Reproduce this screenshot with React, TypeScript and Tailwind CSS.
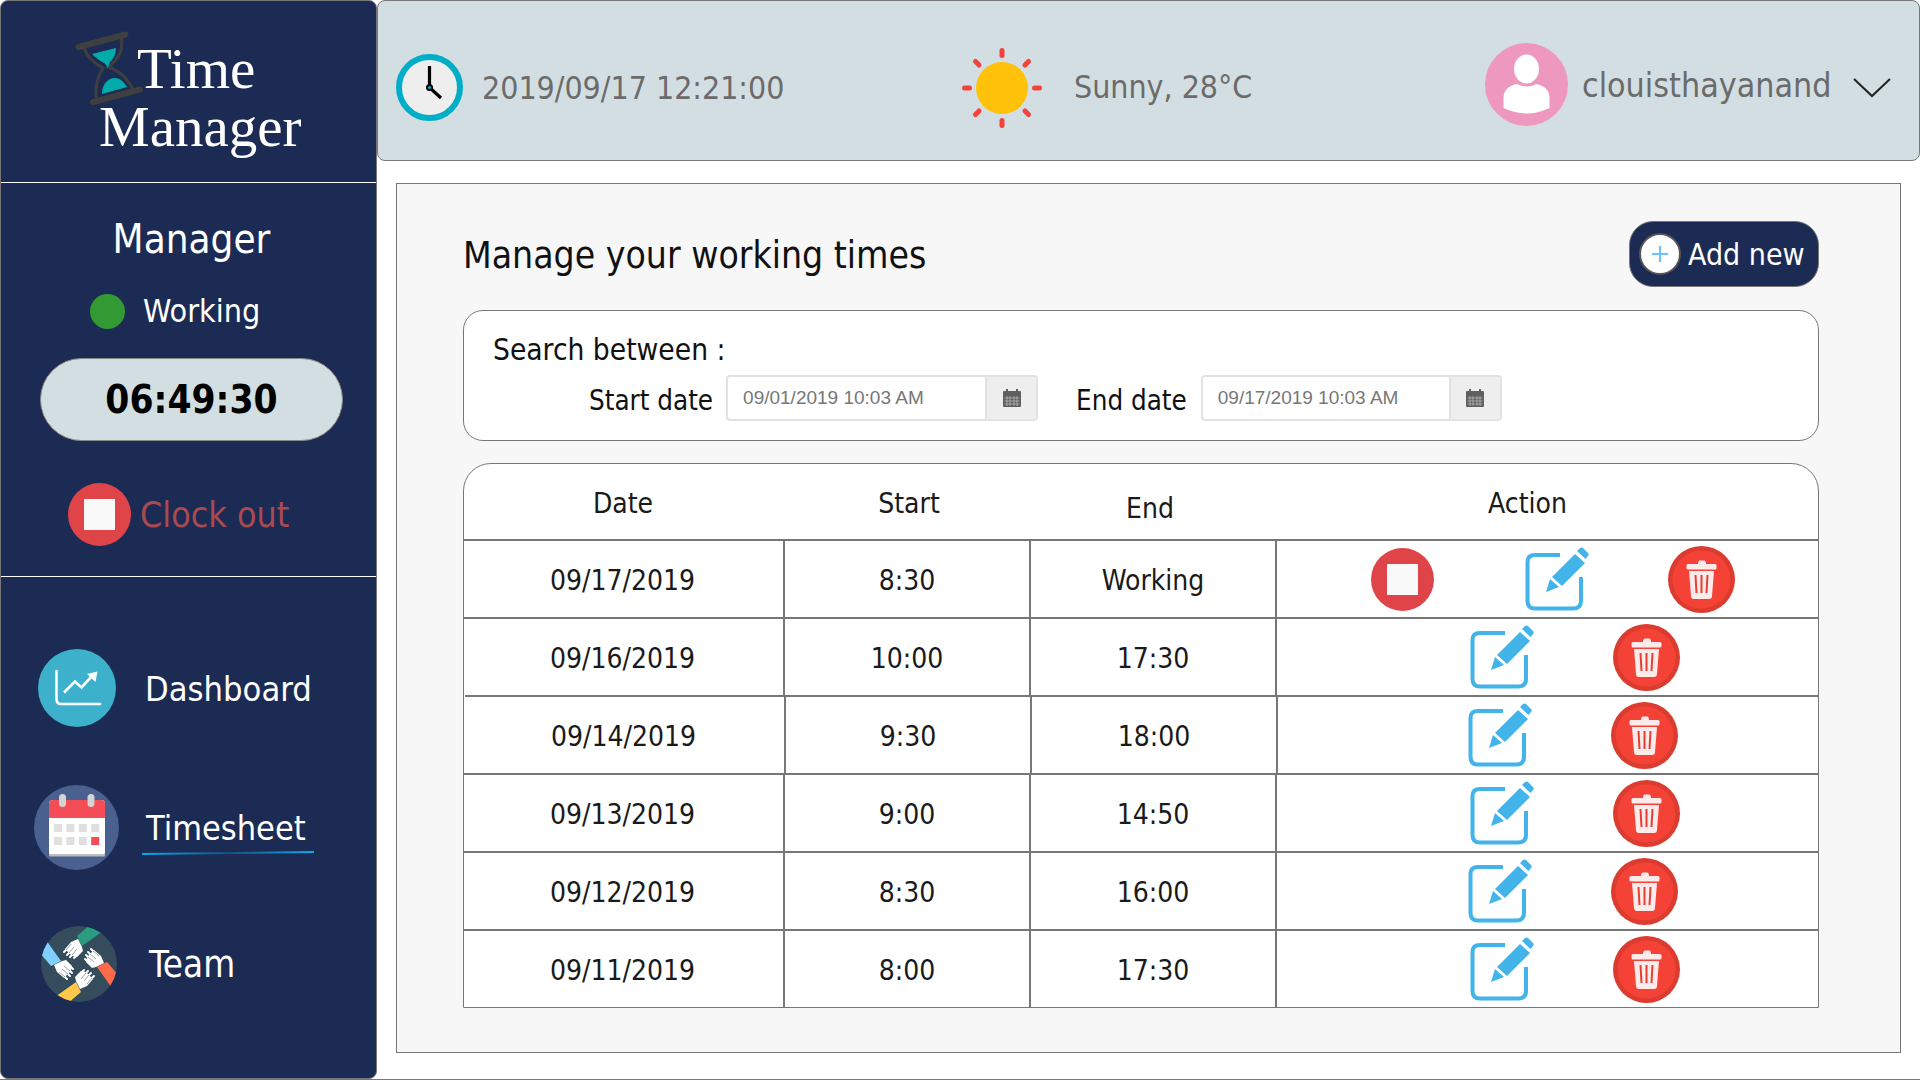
import React from "react";

const font = "font-['DejaVu_Sans_Condensed','DejaVu_Sans',sans-serif]";

function Hourglass() {
  return (
    <svg viewBox="0 0 68 76" className="w-[68px] h-[76px] shrink-0">
      <g transform="translate(-75,-31)">
        <path d="M78.5 47 L125.5 34.5" stroke="#3f3f3f" strokeWidth="6" strokeLinecap="round" />
        <path d="M93 102 L140 89.5" stroke="#3f3f3f" strokeWidth="6" strokeLinecap="round" />
        <path d="M84 47 C88 60 97 64 103 68 C99 74 95 85 96 98" fill="none" stroke="#3f3f3f" strokeWidth="3" />
        <path d="M121 36 C124 50 118 60 108 67 C118 70 128 78 134 92" fill="none" stroke="#3f3f3f" strokeWidth="3" />
        <path d="M92 54 L116 48 C116 54 113 60 110 62 L108 68 C106 65 105 63 104 63 C100 61 95 57 92 54Z" fill="#00aba9" />
        <path d="M102 94 C102 84 108 78 115 78 C120 78 124 82 127 87Z" fill="#00aba9" />
      </g>
    </svg>
  );
}

function StopIcon({ className }: { className: string }) {
  return (
    <svg viewBox="0 0 63 63" className={className}>
      <circle cx="31.5" cy="31.5" r="31.5" fill="#de4448" />
      <rect x="16" y="16" width="31" height="31" fill="#f9f9f9" />
    </svg>
  );
}

function EditIcon() {
  return (
    <svg viewBox="0 0 65 64" className="w-[65px] h-[64px] shrink-0">
      <path d="M35 8 H10 Q2.500 8 2.500 15 V54 Q2.500 61.500 10 61.500 H48 Q56 61.500 56 54 V30" fill="none" stroke="#42b4e9" strokeWidth="4" />
      <path d="M21 45 L25 32 L34 40Z" fill="#42b4e9" />
      <path d="M27 30 L50 7 L60 16 L37 39Z" fill="#42b4e9" />
      <path d="M52 4 L55 1 Q56.500 0 58 1 L63 6 Q64.500 7.500 63 9 L60.500 12Z" fill="#42b4e9" />
    </svg>
  );
}

function TrashIcon() {
  return (
    <svg viewBox="0 0 67 67" className="w-[67px] h-[67px] shrink-0">
      <circle cx="33.500" cy="33.500" r="33.500" fill="#dc3b30" />
      <circle cx="33.500" cy="33.500" r="29" fill="#f44336" />
      <path d="M30 18 Q30 14.500 32 14.500 H36 Q38 14.500 38 18Z" fill="#fdeaea" />
      <rect x="18.500" y="18" width="30" height="5.500" rx="1.500" fill="#fdeaea" />
      <path d="M21 25 H46 L44 50 Q44 53 41 53 H26 Q23 53 23 50Z" fill="#fdeaea" />
      <path d="M27.500 29 L28.500 47 M33.500 29 V47 M39.500 29 L38.500 47" stroke="#e53e33" strokeWidth="2" />
    </svg>
  );
}

function CalSmall() {
  return (
    <svg viewBox="0 0 18 18" className="w-[18px] h-[18px]">
      <rect x="0" y="2" width="18" height="16" rx="1" fill="#5f5f5f" />
      <rect x="3" y="0" width="2" height="3" fill="#5f5f5f" />
      <rect x="13" y="0" width="2" height="3" fill="#5f5f5f" />
      <path d="M1.500 9 H16.500 M1.500 12 H16.500 M1.500 15 H16.500 M4 7 V17 M7 7 V17 M11 7 V17 M14 7 V17" stroke="#b5b5b5" strokeWidth="0.8" />
    </svg>
  );
}

function ChartIcon() {
  return (
    <svg viewBox="0 0 78 78" className="w-[78px] h-[78px]">
      <circle cx="39" cy="39" r="39" fill="#3db1cb" />
      <path d="M18.500 22 V50 Q18.500 55 23 55 H62" fill="none" stroke="#fff" strokeWidth="2.600" strokeLinecap="round" />
      <path d="M26 43.500 L37 32.500 L43.500 38.500 L55 26" fill="none" stroke="#fff" strokeWidth="2.600" />
      <path d="M49 25 L59.500 22.500 L57.500 33Z" fill="#fff" />
    </svg>
  );
}

function CalendarBig() {
  const grey = [0, 1, 2, 3];
  return (
    <svg viewBox="0 0 85 85" className="w-[85px] h-[85px]">
      <circle cx="42.500" cy="42.500" r="42.500" fill="#4a6190" />
      <rect x="15" y="15" width="56" height="56" rx="4" fill="#fff" />
      <path d="M15 33 V19 Q15 15 19 15 H67 Q71 15 71 19 V33Z" fill="#f44d58" />
      <rect x="15" y="69" width="56" height="2.500" rx="1" fill="#bdbdbd" />
      <rect x="25" y="9" width="7" height="13" rx="3.500" fill="#d4d4d4" />
      <rect x="53.500" y="9" width="7" height="13" rx="3.500" fill="#d4d4d4" />
      {grey.map((i) => (
        <rect key={"a" + i} x={20 + i * 12.400} y="39" width="8" height="8" fill="#dfdfdf" />
      ))}
      {grey.map((i) => (
        <rect key={"b" + i} x={20 + i * 12.400} y="52" width="8" height="8" fill={i === 3 ? "#f44d58" : "#dfdfdf"} />
      ))}
    </svg>
  );
}

function TeamIcon() {
  const arms = [
    { r: 0, c: "#2a9d80" },
    { r: 90, c: "#ff6b4a" },
    { r: 180, c: "#ffc84a" },
    { r: 270, c: "#7fd0ff" },
  ];
  return (
    <svg viewBox="-38 -38 76 76" className="w-[76px] h-[76px]">
      <clipPath id="teamclip">
        <circle cx="0" cy="0" r="38" />
      </clipPath>
      <circle cx="0" cy="0" r="38" fill="#344c5c" />
      <g clipPath="url(#teamclip)">
        {arms.map((a) => (
          <g key={a.r} transform={`rotate(${a.r})`}>
            <path d="M-2 -28 L12 -40 L24 -33 L3 -18Z" fill={a.c} />
            <path d="M3 -17 L-1 -25 L-8 -22 L-14 -15 L-7 -8 L-2 -7 L4 -13Z" fill="#fff" />
            <path d="M-8 -19 L-15 -12 M-5 -16 L-12 -9 M-2 -14 L-9 -7 M1 -12 L-5 -6" stroke="#fff" strokeWidth="2" strokeLinecap="round" />
            <path d="M-8 -20 L-13 -14 M-5 -17 L-10 -11 M-2 -15 L-7 -9" stroke="#344c5c" strokeWidth="0.5" />
          </g>
        ))}
      </g>
    </svg>
  );
}

function ClockIcon() {
  return (
    <svg viewBox="0 0 67 67" className="w-[67px] h-[67px] shrink-0">
      <circle cx="33.500" cy="33.500" r="30.500" fill="#eeeeee" stroke="#00aec7" strokeWidth="6" />
      <path d="M33.500 12 V33.500 L45 44" fill="none" stroke="#000" strokeWidth="3.200" />
      <circle cx="33.500" cy="33.500" r="3.500" fill="#000" />
      <circle cx="33.500" cy="33.500" r="1.600" fill="#00aec7" />
    </svg>
  );
}

function SunIcon() {
  const rays = [0, 45, 90, 135, 180, 225, 270, 315];
  return (
    <svg viewBox="-40 -40 80 80" className="w-[80px] h-[80px] shrink-0">
      <circle cx="0" cy="0" r="26" fill="#ffc10a" />
      {rays.map((r) => (
        <rect key={r} x="-2.500" y="-40" width="5" height="10" rx="2.500" fill="#f4433c" transform={`rotate(${r})`} />
      ))}
    </svg>
  );
}

function UserIcon() {
  return (
    <svg viewBox="0 0 83 83" className="w-[83px] h-[83px] shrink-0">
      <circle cx="41.500" cy="41.500" r="41.500" fill="#ee97bf" />
      <ellipse cx="41.500" cy="26" rx="12.500" ry="14.500" fill="#fff" />
      <path d="M32 41 Q41.500 46 51 41 Q65 44 64.500 56 V65 Q41.500 76 18.500 65 V56 Q18 44 32 41Z" fill="#fff" />
    </svg>
  );
}

type RowData = {
  date: string;
  start: string;
  end: string;
  stop?: boolean;
  pl: string;
  shift?: boolean;
};

const rows: RowData[] = [
  { date: "09/17/2019", start: "8:30", end: "Working", stop: true, pl: "pl-[94px]" },
  { date: "09/16/2019", start: "10:00", end: "17:30", pl: "pl-[193px]" },
  { date: "09/14/2019", start: "9:30", end: "18:00", pl: "pl-[190px]", shift: true },
  { date: "09/13/2019", start: "9:00", end: "14:50", pl: "pl-[193px]" },
  { date: "09/12/2019", start: "8:30", end: "16:00", pl: "pl-[191px]" },
  { date: "09/11/2019", start: "8:00", end: "17:30", pl: "pl-[193px]" },
];

function Row({ r }: { r: RowData }) {
  return (
    <div className={`flex h-[78px] border-t-2 border-[#777] text-[28px] text-[#1a1a1a] ${r.shift ? "ml-px -mr-px" : ""}`}>
      <div className="w-[321px] flex items-center justify-center border-r-2 border-[#777] pt-[3px] pr-[2px]">{r.date}</div>
      <div className="w-[246px] flex items-center justify-center border-r-2 border-[#777] pt-[3px]">{r.start}</div>
      <div className="w-[246px] flex items-center justify-center border-r-2 border-[#777] pt-[3px]">{r.end}</div>
      <div className={`flex-1 flex items-center ${r.pl}`}>
        {r.stop ? (
          <>
            <StopIcon className="w-[63px] h-[63px] shrink-0 mr-[91px]" />
            <EditIcon />
          </>
        ) : (
          <EditIcon />
        )}
        <div className="ml-[78px]">
          <TrashIcon />
        </div>
      </div>
    </div>
  );
}

function DateInput({ value, w }: { value: string; w: string }) {
  return (
    <div className={`flex h-[46px] -mt-[2px] ${w} rounded-[4px] border-2 border-[#e2e2e2] bg-white font-['Liberation_Sans',sans-serif]`}>
      <div className="flex-1 flex items-center pl-[15px] text-[19px] text-[#777]">{value}</div>
      <div className="w-[51px] flex items-center justify-center bg-[#eeeeee] border-l-2 border-[#e2e2e2]">
        <CalSmall />
      </div>
    </div>
  );
}

export default function App() {
  return (
    <div className={`w-[1920px] h-[1080px] flex bg-white overflow-hidden border-b border-[#777] ${font}`}>
      <aside className="w-[377px] shrink-0 flex flex-col bg-[#1c2b54] border border-[#777] rounded-[8px] text-white">
        <div className="h-[182px] border-b border-white flex flex-col font-['Liberation_Serif',serif] text-[57px] leading-[58px]">
          <div className="flex items-start pl-[74px] pt-[30px] h-[88px]">
            <Hourglass />
            <span className="-ml-[6px] pt-[9px]">Time</span>
          </div>
          <div className="pl-[98px] mt-[9px]">Manager</div>
        </div>
        <div className="h-[394px] border-b border-white flex flex-col items-center">
          <div className="mt-[33px] h-[46px] flex items-center text-[40px] pl-[6px]">Manager</div>
          <div className="mt-[27px] flex items-center h-[44px] w-full pl-[89px] text-[32px]">
            <span className="w-[35px] h-[35px] rounded-full bg-[#339933] mr-[18px]" />
            Working
          </div>
          <div className="mt-[25px] ml-[6px] w-[303px] h-[83px] rounded-full bg-[#d3dee2] border border-[#888] flex items-center justify-center text-black font-bold text-[38.5px]">
            06:49:30
          </div>
          <div className="mt-[42px] w-full pl-[67px] flex items-center text-[35.5px] text-[#a94a50]">
            <StopIcon className="w-[63px] h-[63px] shrink-0 mr-[9px]" />
            <span>Clock out</span>
          </div>
        </div>
        <nav className="flex flex-col pt-[72px]">
          <div className="flex items-center h-[78px] pl-[37px] text-[34.2px]">
            <ChartIcon />
            <span className="ml-[29px] mt-[3px]">Dashboard</span>
          </div>
          <div className="flex items-center h-[85px] pl-[33px] mt-[58px] text-[34px]">
            <CalendarBig />
            <div className="ml-[23px] mt-[2px] flex flex-col">
              <span className="pl-[4px] leading-[48px]">Timesheet</span>
              <div className="w-[172px] h-[2px] -rotate-[0.7deg] bg-linear-to-r from-[#00aeef] via-[#14507e] to-[#00aeef]" />
            </div>
          </div>
          <div className="flex items-center h-[76px] pl-[40px] mt-[56px] text-[36.5px]">
            <TeamIcon />
            <span className="ml-[32px] mt-[2px]">Team</span>
          </div>
        </nav>
      </aside>

      <div className="flex-1 flex flex-col min-w-0">
        <header className="h-[161px] bg-[#d3dee2] border border-[#777] rounded-[8px] flex items-center text-[#6b6b6b] text-[31.8px] pt-[14px]">
          <div className="flex items-center pl-[18px] w-[600px]">
            <ClockIcon />
            <span className="ml-[19px]">2019/09/17 12:21:00</span>
          </div>
          <div className="flex items-center w-[523px] -ml-[16px]">
            <SunIcon />
            <span className="ml-[32px] -mt-[1px]">Sunny, 28°C</span>
          </div>
          <div className="flex items-center -mt-[6px]">
            <UserIcon />
            <span className="ml-[14px] mt-[3px] text-[33.7px]">clouisthayanand</span>
            <svg viewBox="0 0 38 20" className="w-[38px] h-[20px] ml-[22px] mt-[6px]">
              <path d="M1 1 L19 18 L37 1" fill="none" stroke="#222" strokeWidth="2" />
            </svg>
          </div>
        </header>

        <main className="mt-[22px] ml-[19px] mr-[19px] h-[870px] bg-[#f7f7f7] border border-[#777] pl-[66px] pr-[81px] pt-[37px] flex flex-col text-[#111]">
          <div className="flex items-center justify-between h-[66px]">
            <h1 className="text-[37px] font-normal pt-[4px]">Manage your working times</h1>
            <button className="w-[190px] h-[66px] rounded-[24px] bg-[#1c2b54] border border-[#777] flex items-center pl-[9px] text-white text-[30px]">
              <span className="w-[42px] h-[42px] rounded-full bg-white border-2 border-[#555] flex items-center justify-center mr-[7px] shrink-0">
                <svg viewBox="0 0 18 18" className="w-[18px] h-[18px]">
                  <path d="M9 1 V17 M1 9 H17" stroke="#6cc0ff" strokeWidth="2" />
                </svg>
              </span>
              Add new
            </button>
          </div>

          <section className="mt-[23px] h-[131px] bg-white border border-[#777] rounded-[20px] pl-[29px] pt-[19px] text-[29.6px]">
            <div className="h-[40px] flex items-center">Search between :</div>
            <div className="flex items-center mt-[7px] pl-[96px] text-[27.5px]">
              <span className="mt-[3px] mr-[13px]">Start date</span>
              <DateInput value="09/01/2019 10:03 AM" w="w-[312px]" />
              <span className="mt-[3px] ml-[38px] mr-[14px]">End date</span>
              <DateInput value="09/17/2019 10:03 AM" w="w-[301px]" />
            </div>
          </section>

          <section className="mt-[22px] bg-white border border-[#777] rounded-t-[28px] text-[28px] text-[#1a1a1a]">
            <div className="flex h-[75px]">
              <div className="w-[321px] flex items-center justify-center pr-[3px] pt-[5px]">Date</div>
              <div className="w-[246px] flex items-center justify-center pl-[2px] pt-[5px]">Start</div>
              <div className="w-[246px] flex items-center justify-center pt-[15px] pr-[8px]">End</div>
              <div className="flex-1 flex items-center justify-center pr-[40px] pt-[5px]">Action</div>
            </div>
            {rows.map((r) => (
              <Row key={r.date} r={r} />
            ))}
          </section>
        </main>
      </div>
    </div>
  );
}
